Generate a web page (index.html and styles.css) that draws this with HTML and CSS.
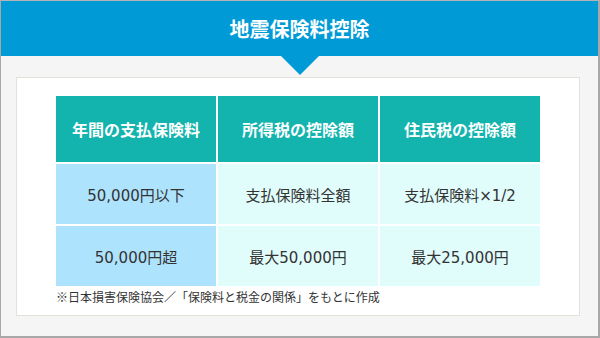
FILE: index.html
```html
<!DOCTYPE html>
<html lang="ja">
<head>
<meta charset="utf-8">
<link rel="stylesheet" href="styles.css">
</head>
<body>
<div class="frame">
  <div class="banner">
    <h1 class="title">地震保険料控除</h1>
  </div>
  <div class="card">
    <div class="table">
      <div class="th">年間の支払保険料</div>
      <div class="th">所得税の控除額</div>
      <div class="th">住民税の控除額</div>
      <div class="td key">50,000円以下</div>
      <div class="td">支払保険料全額</div>
      <div class="td">支払保険料×1/2</div>
      <div class="td key">50,000円超</div>
      <div class="td">最大50,000円</div>
      <div class="td">最大25,000円</div>
    </div>
    <p class="note">※日本損害保険協会／「保険料と税金の関係」をもとに作成</p>
  </div>
</div>
</body>
</html>
```
FILE: styles.css
```css
* { box-sizing: border-box; }
html, body { margin: 0; padding: 0; }
body {
  width: 600px;
  height: 338px;
  overflow: hidden;
  font-family: "Noto Sans CJK JP", sans-serif;
}
.frame {
  width: 600px;
  height: 338px;
  background: #f5f5f5;
  border-top: 1px solid #b4b4b4;
  border-left: 1px solid #a8a8a8;
  border-right: 2px solid #a8a8a8;
  border-bottom: 2px solid #a8a8a8;
}
.banner {
  position: relative;
  height: 55px;
  background: #009bd6;
  display: flex;
  align-items: center;
  justify-content: center;
}
.banner::after {
  content: "";
  position: absolute;
  left: 280px;
  top: 55px;
  border-left: 19px solid transparent;
  border-right: 19px solid transparent;
  border-top: 19px solid #009bd6;
}
.title {
  margin: 0;
  color: #fff;
  font-size: 20px;
  font-weight: 700;
  line-height: 1;
  letter-spacing: 0;
}
.card {
  margin: 21px 0 0 15px;
  width: 564px;
  height: 239px;
  background: #fff;
  border: 1px solid #e4e0da;
  padding: 18px 0 0 39px;
}
.table {
  display: grid;
  grid-template-columns: 160px 160px 160px;
  grid-template-rows: 66px 60px 60px;
  gap: 2px;
}
.th, .td {
  display: flex;
  align-items: center;
  justify-content: center;
}
.th {
  background: #13b4ae;
  color: #fff;
  font-size: 16px;
  font-weight: 700;
}
.td {
  background: #e0fcfb;
  color: #333;
  font-family: "DejaVu Sans", "Noto Sans CJK JP", sans-serif;
  font-size: 15px;
}
.td.key {
  background: #aee3fd;
}
.note {
  margin: 3px 0 0;
  font-size: 12px;
  line-height: 16px;
  color: #333;
}
```
